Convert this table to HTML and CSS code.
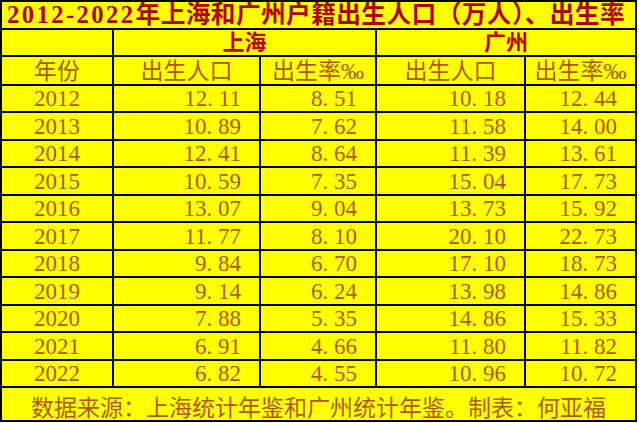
FILE: index.html
```html
<!DOCTYPE html>
<html lang="zh-CN">
<head>
<meta charset="utf-8">
<title>2012-2022年上海和广州户籍出生人口</title>
<link rel="stylesheet" href="styles.css">
</head>
<body>
<div class="sheet">
  <div class="cell title"><span class="yr">2012-2022</span>年上海和广州户籍出生人口（万人）、出生率</div>

  <div class="cell"></div>
  <div class="cell city span2">上海</div>
  <div class="cell city span2">广州</div>

  <div class="cell head">年份</div>
  <div class="cell head">出生人口</div>
  <div class="cell head">出生率‰</div>
  <div class="cell head">出生人口</div>
  <div class="cell head">出生率‰</div>

  <div class="cell year">2012</div><div class="cell num">12<span class="pt">.</span>11</div><div class="cell num">8<span class="pt">.</span>51</div><div class="cell num">10<span class="pt">.</span>18</div><div class="cell num">12<span class="pt">.</span>44</div>
  <div class="cell year">2013</div><div class="cell num">10<span class="pt">.</span>89</div><div class="cell num">7<span class="pt">.</span>62</div><div class="cell num">11<span class="pt">.</span>58</div><div class="cell num">14<span class="pt">.</span>00</div>
  <div class="cell year">2014</div><div class="cell num">12<span class="pt">.</span>41</div><div class="cell num">8<span class="pt">.</span>64</div><div class="cell num">11<span class="pt">.</span>39</div><div class="cell num">13<span class="pt">.</span>61</div>
  <div class="cell year">2015</div><div class="cell num">10<span class="pt">.</span>59</div><div class="cell num">7<span class="pt">.</span>35</div><div class="cell num">15<span class="pt">.</span>04</div><div class="cell num">17<span class="pt">.</span>73</div>
  <div class="cell year">2016</div><div class="cell num">13<span class="pt">.</span>07</div><div class="cell num">9<span class="pt">.</span>04</div><div class="cell num">13<span class="pt">.</span>73</div><div class="cell num">15<span class="pt">.</span>92</div>
  <div class="cell year">2017</div><div class="cell num">11<span class="pt">.</span>77</div><div class="cell num">8<span class="pt">.</span>10</div><div class="cell num">20<span class="pt">.</span>10</div><div class="cell num">22<span class="pt">.</span>73</div>
  <div class="cell year">2018</div><div class="cell num">9<span class="pt">.</span>84</div><div class="cell num">6<span class="pt">.</span>70</div><div class="cell num">17<span class="pt">.</span>10</div><div class="cell num">18<span class="pt">.</span>73</div>
  <div class="cell year">2019</div><div class="cell num">9<span class="pt">.</span>14</div><div class="cell num">6<span class="pt">.</span>24</div><div class="cell num">13<span class="pt">.</span>98</div><div class="cell num">14<span class="pt">.</span>86</div>
  <div class="cell year">2020</div><div class="cell num">7<span class="pt">.</span>88</div><div class="cell num">5<span class="pt">.</span>35</div><div class="cell num">14<span class="pt">.</span>86</div><div class="cell num">15<span class="pt">.</span>33</div>
  <div class="cell year">2021</div><div class="cell num">6<span class="pt">.</span>91</div><div class="cell num">4<span class="pt">.</span>66</div><div class="cell num">11<span class="pt">.</span>80</div><div class="cell num">11<span class="pt">.</span>82</div>
  <div class="cell year">2022</div><div class="cell num">6<span class="pt">.</span>82</div><div class="cell num">4<span class="pt">.</span>55</div><div class="cell num">10<span class="pt">.</span>96</div><div class="cell num">10<span class="pt">.</span>72</div>

  <div class="cell foot">数据来源：上海统计年鉴和广州统计年鉴。制表：何亚福</div>
</div>
</body>
</html>
```

FILE: styles.css
```css
html, body {
  margin: 0;
  padding: 0;
  background: #ffffff;
}

.sheet {
  box-sizing: border-box;
  width: 637px;
  height: 422px;
  display: grid;
  grid-template-columns: 110px 145px 114px 147px 109px;
  grid-template-rows: 26px 25px 27px repeat(11, 1fr) 32px;
  gap: 2px;
  padding: 2px;
  background: #000000;
  font-family: "Liberation Serif", "Noto Sans CJK SC", serif;
  color: #b0580a;
}

.cell {
  background: #ffff00;
  display: flex;
  align-items: flex-end;
  justify-content: center;
  font-size: 23px;
  line-height: 20px;
  padding-bottom: 2px;
  white-space: nowrap;
  overflow: hidden;
}

.title {
  grid-column: 1 / -1;
  justify-content: flex-start;
  align-items: center;
  padding: 0 0 0 5px;
  font-size: 24.7px;
  line-height: 26px;
  letter-spacing: 0.4px;
  font-weight: bold;
  color: #b00000;
}

.yr {
  letter-spacing: 2.4px;
}

.span2 {
  grid-column: span 2;
}

.city {
  align-items: center;
  padding: 0;
  font-size: 22px;
  line-height: 25px;
  font-weight: bold;
  color: #c00000;
}

.head {
  padding-bottom: 2px;
}

.num {
  justify-content: flex-end;
  padding-right: 18px;
}

.pt {
  display: inline-block;
  width: 0.5em;
}

.foot {
  grid-column: 1 / -1;
  padding-bottom: 1px;
}
```
